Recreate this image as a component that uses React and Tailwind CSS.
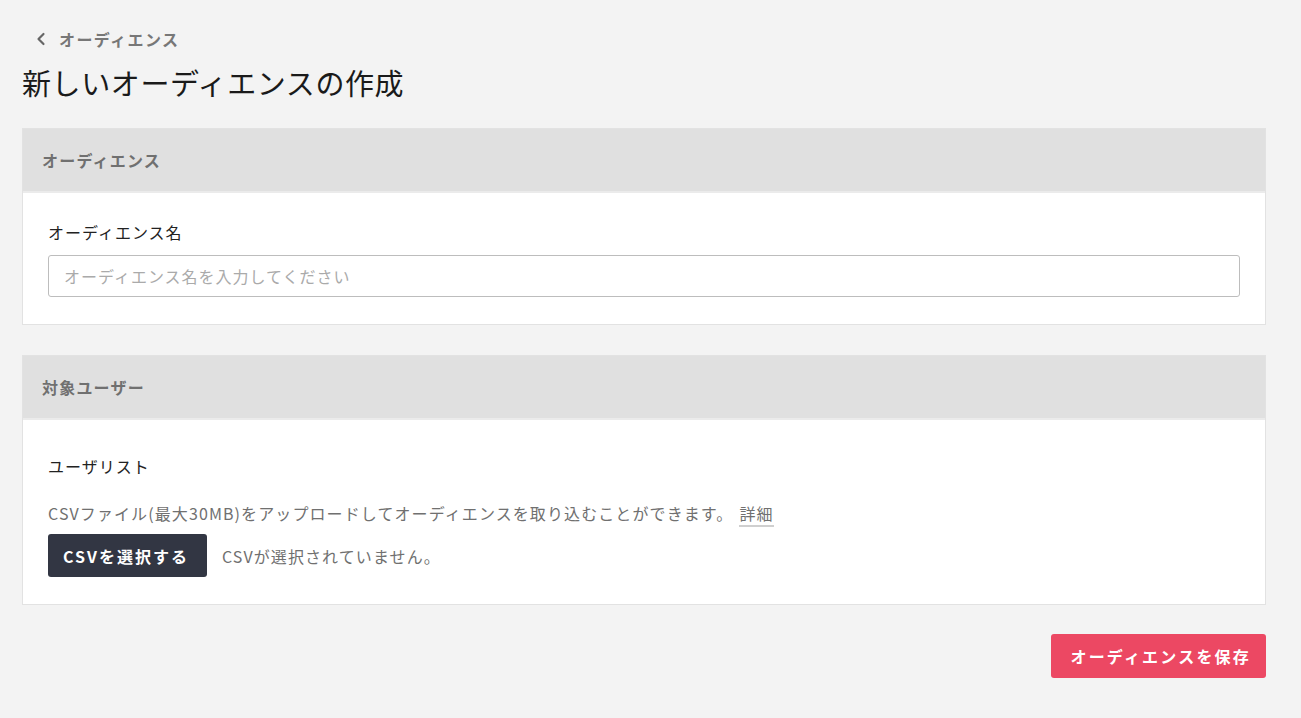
import { ChevronLeft } from 'lucide-react'

const font = { fontFamily: '"Noto Sans CJK JP", "Noto Sans", sans-serif' }

const Section = ({ title, children }) => (
  <div className="border border-[#e2e2e2] bg-white">
    <div className="h-[64px] flex items-center px-[19px] bg-[#e0e0e0] border-b-2 border-[#ebebeb]">
      <h2 className="text-base font-bold tracking-[1.2px] text-[#707070]">{title}</h2>
    </div>
    {children}
  </div>
)

export default function App() {
  return (
    <div className="min-h-screen bg-[#f3f3f3] text-[#222]" style={font}>
      <div className="pl-[22px] pr-[35px] pt-[26px] pb-10">
        {/* 戻るリンク */}
        <a href="#" className="flex items-center gap-[8px] pl-[9px] text-base font-bold tracking-[1.4px] text-[#777] h-[26px]">
          <ChevronLeft size={20} strokeWidth={2.6} className="text-[#666]" />
          オーディエンス
        </a>

        <h1 className="mt-[10px] text-[29px] leading-[40px] tracking-[0.6px] text-[#1a1a1a]">新しいオーディエンスの作成</h1>

        <div className="mt-[26px] flex flex-col gap-[30px]">
          <Section title="オーディエンス">
            <div className="px-[25px] pt-[27px] pb-[27px]">
              <label className="block text-base leading-6 tracking-[1px] text-[#222]">オーディエンス名</label>
              <input
                type="text"
                placeholder="オーディエンス名を入力してください"
                className="mt-[11px] w-full h-[42px] px-[15px] bg-white border border-[#bdbdbd] rounded-[3px] text-base tracking-[1px] placeholder:text-[#aaa] focus:outline-none"
              />
            </div>
          </Section>

          <Section title="対象ユーザー">
            <div className="px-[25px] pt-[34px] pb-[27px]">
              <div className="text-base leading-6 tracking-[1px] text-[#222]">ユーザリスト</div>
              <p className="mt-[23px] text-base leading-6 tracking-[1.1px] text-[#707070]">
                CSVファイル(最大30MB)をアップロードしてオーディエンスを取り込むことができます。
                <a href="#" className="ml-[6px] border-b-2 border-[#cfcfcf] text-[#707070]">詳細</a>
              </p>
              <div className="mt-[9px] flex items-center gap-[15px]">
                <button className="h-[43px] pl-[15px] pr-[18px] rounded-[3px] bg-[#323643] text-white font-bold text-base tracking-[2px]">
                  CSVを選択する
                </button>
                <span className="text-base tracking-[1.1px] text-[#707070]">CSVが選択されていません。</span>
              </div>
            </div>
          </Section>
        </div>

        <div className="mt-[29px] flex justify-end">
          <button className="h-[44px] pl-[19px] pr-[15px] rounded-[3px] bg-[#ec4863] text-white font-bold text-base tracking-[2.2px]">
            オーディエンスを保存
          </button>
        </div>
      </div>
    </div>
  )
}
